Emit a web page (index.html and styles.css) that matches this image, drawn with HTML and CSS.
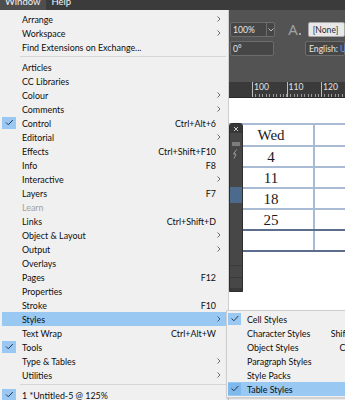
FILE: index.html
```html
<!DOCTYPE html>
<html>
<head>
<meta charset="utf-8">
<link rel="stylesheet" href="styles.css">
</head>
<body>
<div class="app">
  <div class="menubar">
    <span class="mb-item open">Window</span>
    <span class="mb-item">Help</span>
  </div>

  <div class="toolbar">
    <div class="tb-row">
      <div class="field dark combo"><span class="fv">100%</span><span class="dd"><svg width="6" height="4" viewBox="0 0 6 4"><path d="M0.5 0.5 L3 3 L5.5 0.5" fill="none" stroke="#bdbdbd" stroke-width="1"/></svg></span></div>
      <div class="a-icon">A<span class="a-dot"></span></div>
      <div class="field light">[None]</div>
    </div>
    <div class="tb-row">
      <div class="field dark angle"><span class="fv">0°</span></div>
      <div class="tb-gap"></div>
      <div class="field dark lang">English: <span class="blue">UK</span></div>
    </div>
  </div>

  <div class="ruler">
    <div class="r-lead"></div>
    <div class="r-seg"><span>100</span></div>
    <div class="r-seg"><span>110</span></div>
    <div class="r-seg"><span>120</span></div>
  </div>

  <div class="doc">
    <table class="cal">
      <tr><td>Wed</td><td></td></tr>
      <tr><td>4</td><td></td></tr>
      <tr><td>11</td><td></td></tr>
      <tr><td>18</td><td></td></tr>
      <tr class="dk"><td>25</td><td></td></tr>
      <tr class="dk"><td></td><td></td></tr>
    </table>
  </div>

  <div class="panel">
    <div class="p-head"><svg width="6" height="6" viewBox="0 0 6 6"><path d="M1 1 L5 5 M5 1 L1 5" stroke="#cfcfcf" stroke-width="1"/></svg></div>
    <span class="p-bar"></span>
    <svg class="p-bolt" width="6" height="10" viewBox="0 0 6 10"><path d="M4.5 0.5 L1.5 5 L4 5 L2 9.5" fill="none" stroke="#9a9a9a" stroke-width="1"/></svg>
    <div class="p-sel"></div>
    <div class="p-line"></div>
    <div class="p-line second"></div>
    <div class="p-foot"></div>
  </div>

  <div class="menu">
    <div class="mi"><span class="ck"></span><span class="lb">Arrange</span><span class="ar"><svg width="4" height="6" viewBox="0 0 4 6"><path d="M0.5 0.5 L3 3 L0.5 5.5" fill="none" stroke="#6b6b6b"/></svg></span></div>
    <div class="mi"><span class="ck"></span><span class="lb">Workspace</span><span class="ar"><svg width="4" height="6" viewBox="0 0 4 6"><path d="M0.5 0.5 L3 3 L0.5 5.5" fill="none" stroke="#6b6b6b"/></svg></span></div>
    <div class="mi"><span class="ck"></span><span class="lb">Find Extensions on Exchange...</span><span class="ar"></span></div>
    <div class="sep"></div>
    <div class="mi"><span class="ck"></span><span class="lb">Articles</span><span class="ar"></span></div>
    <div class="mi"><span class="ck"></span><span class="lb">CC Libraries</span><span class="ar"></span></div>
    <div class="mi"><span class="ck"></span><span class="lb">Colour</span><span class="ar"><svg width="4" height="6" viewBox="0 0 4 6"><path d="M0.5 0.5 L3 3 L0.5 5.5" fill="none" stroke="#6b6b6b"/></svg></span></div>
    <div class="mi"><span class="ck"></span><span class="lb">Comments</span><span class="ar"><svg width="4" height="6" viewBox="0 0 4 6"><path d="M0.5 0.5 L3 3 L0.5 5.5" fill="none" stroke="#6b6b6b"/></svg></span></div>
    <div class="mi"><span class="ck on"><svg width="14" height="12" viewBox="0 0 14 12"><path d="M4 5.5 L6.3 7.8 L10.8 3" fill="none" stroke="#26394f" stroke-width="1"/></svg></span><span class="lb">Control</span><span class="sc">Ctrl+Alt+6</span><span class="ar"></span></div>
    <div class="mi"><span class="ck"></span><span class="lb">Editorial</span><span class="ar"><svg width="4" height="6" viewBox="0 0 4 6"><path d="M0.5 0.5 L3 3 L0.5 5.5" fill="none" stroke="#6b6b6b"/></svg></span></div>
    <div class="mi"><span class="ck"></span><span class="lb">Effects</span><span class="sc">Ctrl+Shift+F10</span><span class="ar"></span></div>
    <div class="mi"><span class="ck"></span><span class="lb">Info</span><span class="sc">F8</span><span class="ar"></span></div>
    <div class="mi"><span class="ck"></span><span class="lb">Interactive</span><span class="ar"><svg width="4" height="6" viewBox="0 0 4 6"><path d="M0.5 0.5 L3 3 L0.5 5.5" fill="none" stroke="#6b6b6b"/></svg></span></div>
    <div class="mi"><span class="ck"></span><span class="lb">Layers</span><span class="sc">F7</span><span class="ar"></span></div>
    <div class="mi dis"><span class="ck"></span><span class="lb">Learn</span><span class="ar"></span></div>
    <div class="mi"><span class="ck"></span><span class="lb">Links</span><span class="sc">Ctrl+Shift+D</span><span class="ar"></span></div>
    <div class="mi"><span class="ck"></span><span class="lb">Object &amp; Layout</span><span class="ar"><svg width="4" height="6" viewBox="0 0 4 6"><path d="M0.5 0.5 L3 3 L0.5 5.5" fill="none" stroke="#6b6b6b"/></svg></span></div>
    <div class="mi"><span class="ck"></span><span class="lb">Output</span><span class="ar"><svg width="4" height="6" viewBox="0 0 4 6"><path d="M0.5 0.5 L3 3 L0.5 5.5" fill="none" stroke="#6b6b6b"/></svg></span></div>
    <div class="mi"><span class="ck"></span><span class="lb">Overlays</span><span class="ar"></span></div>
    <div class="mi"><span class="ck"></span><span class="lb">Pages</span><span class="sc">F12</span><span class="ar"></span></div>
    <div class="mi"><span class="ck"></span><span class="lb">Properties</span><span class="ar"></span></div>
    <div class="mi"><span class="ck"></span><span class="lb">Stroke</span><span class="sc">F10</span><span class="ar"></span></div>
    <div class="mi hi"><span class="ck"></span><span class="lb">Styles</span><span class="ar"><svg width="4" height="6" viewBox="0 0 4 6"><path d="M0.5 0.5 L3 3 L0.5 5.5" fill="none" stroke="#4b5b6b"/></svg></span></div>
    <div class="mi"><span class="ck"></span><span class="lb">Text Wrap</span><span class="sc">Ctrl+Alt+W</span><span class="ar"></span></div>
    <div class="mi"><span class="ck on"><svg width="14" height="12" viewBox="0 0 14 12"><path d="M4 5.5 L6.3 7.8 L10.8 3" fill="none" stroke="#26394f" stroke-width="1"/></svg></span><span class="lb">Tools</span><span class="ar"></span></div>
    <div class="mi"><span class="ck"></span><span class="lb">Type &amp; Tables</span><span class="ar"><svg width="4" height="6" viewBox="0 0 4 6"><path d="M0.5 0.5 L3 3 L0.5 5.5" fill="none" stroke="#6b6b6b"/></svg></span></div>
    <div class="mi"><span class="ck"></span><span class="lb">Utilities</span><span class="ar"><svg width="4" height="6" viewBox="0 0 4 6"><path d="M0.5 0.5 L3 3 L0.5 5.5" fill="none" stroke="#6b6b6b"/></svg></span></div>
    <div class="sep"></div>
    <div class="mi"><span class="ck on"><svg width="14" height="12" viewBox="0 0 14 12"><path d="M4 5.5 L6.3 7.8 L10.8 3" fill="none" stroke="#26394f" stroke-width="1"/></svg></span><span class="lb">1 *Untitled-5 @ 125%</span><span class="ar"></span></div>
  </div>

  <div class="submenu">
    <div class="mi"><span class="ck on"><svg width="13" height="12" viewBox="0 0 13 12"><path d="M3.5 5.5 L5.8 7.8 L10.3 3" fill="none" stroke="#26394f" stroke-width="1"/></svg></span><span class="lb">Cell Styles</span><span class="ar"></span></div>
    <div class="mi"><span class="ck"></span><span class="lb">Character Styles</span><span class="sc">Shift+F11</span><span class="ar"></span></div>
    <div class="mi"><span class="ck"></span><span class="lb">Object Styles</span><span class="sc">Ctrl+F7</span><span class="ar"></span></div>
    <div class="mi"><span class="ck"></span><span class="lb">Paragraph Styles</span><span class="sc">F11</span><span class="ar"></span></div>
    <div class="mi"><span class="ck"></span><span class="lb">Style Packs</span><span class="ar"></span></div>
    <div class="mi hi"><span class="ck on"><svg width="13" height="12" viewBox="0 0 13 12"><path d="M3.5 5.5 L5.8 7.8 L10.3 3" fill="none" stroke="#26394f" stroke-width="1"/></svg></span><span class="lb">Table Styles</span><span class="ar"></span></div>
  </div>
</div>
</body>
</html>
```

FILE: styles.css
```css
* { box-sizing: border-box; margin: 0; padding: 0; }
html, body { width: 345px; height: 400px; overflow: hidden; }
body { background: #535353; font-family: Lato, "Noto Sans", sans-serif; }

.app { position: relative; width: 345px; height: 400px; overflow: hidden; background: #535353; }

/* menubar */
.menubar { height: 10px; background: #3b3b3b; display: flex; overflow: hidden; color: #f4f4f4; font-size: 9.5px; }
.mb-item { height: 10px; line-height: 4px; padding: 0 6px 0 5px; }
.mb-item.open { background: #4e4e4e; }

/* control panel */
.toolbar { height: 72px; padding: 12px 0 0 230px; display: flex; flex-direction: column; gap: 4px; background: #535353; }
.tb-row { display: flex; align-items: center; height: 15px; }
.field { height: 15px; border: 1px solid #6c6c6c; border-radius: 2px; font-size: 8.6px; display: flex; align-items: center; padding-left: 2px; white-space: nowrap; }
.field.dark { background: #464646; color: #e6e6e6; }
.field.combo { width: 49px; padding-left: 0; }
.combo .fv { width: 36px; padding-left: 2px; border-right: 1px solid #6c6c6c; height: 100%; display: flex; align-items: center; }
.combo .dd { flex: 1; display: flex; justify-content: center; align-items: center; }
.field.angle { width: 49px; }
.a-icon { width: 21px; margin-left: 13px; color: #a3a3a3; font-size: 15px; line-height: 15px; display: flex; align-items: flex-end; font-family: "Open Sans", sans-serif; }
.a-dot { width: 2px; height: 2px; background: #a3a3a3; margin: 0 0 2px 1px; }
.tb-gap { width: 34px; }
.field.light { background: #e8e8e8; border-color: #a8a8a8; color: #2e2e2e; width: 40px; padding-left: 4px; }
.field.lang { width: 40px; padding-left: 3px; }
.blue { color: #4d9df0; margin-left: 2px; }

/* ruler */
.ruler { height: 16px; background: #3a3a3a; display: flex; border-bottom: 1px solid #2a2a2a; color: #e4e4e4; font-size: 8.6px; }
.r-lead { width: 252px; flex: none; }
.r-seg { width: 34.5px; flex: none; border-left: 1px solid #bdbdbd; padding: 1px 0 0 1px; line-height: 9px;
  background: repeating-linear-gradient(90deg, transparent 0 2.45px, #9a9a9a 2.45px 3.45px) left bottom / 100% 3px no-repeat; }

/* document */
.doc { height: 303px; background: #ffffff; padding: 25px 0 0 227px; overflow: hidden; }
.cal { width: 172px; table-layout: fixed; border-collapse: collapse; font-family: "Liberation Serif", serif; font-size: 15px; color: #1b1b1b; }
.cal td { width: 86px; height: 21px; border: 2px solid #a9bad4; text-align: center; vertical-align: middle; padding: 0; line-height: 16px; }
.cal tr:first-child td { height: 22px; }
.cal tr.dk td { border-bottom-color: #5d6e8d; }

/* collapsed panel */
.panel { position: absolute; left: 229px; top: 123px; width: 14px; height: 169px; background: #474747; border: 1px solid #2e2e2e; border-radius: 3px 3px 0 0; display: flex; flex-direction: column; align-items: center; }
.p-head { width: 100%; height: 9px; background: #383838; border-radius: 2px 2px 0 0; display: flex; justify-content: center; align-items: center; flex: none; }
.p-bar { width: 8px; height: 4px; background: #7d7d7d; margin-top: 9px; flex: none; }
.p-bolt { margin-top: 3px; margin-right: 3px; flex: none; }
.p-sel { width: 100%; height: 16px; margin-top: 28px; background: #4c6a8c; flex: none; }
.p-line { width: 100%; height: 1px; background: #3a3a3a; margin-top: 62px; flex: none; }
.p-line.second { margin-top: 11px; }
.p-foot { width: 100%; margin-top: auto; height: 3px; border-top: 1px solid #3a3a3a; background: #3a3a3a; flex: none; }

/* menus */
.menu { position: absolute; left: 0; top: 10px; width: 229px; height: 392px; background: #f0f0f0; border-right: 1px solid #cfcfcf; padding-top: 2px; font-size: 8.9px; color: #0d0d0d; }
.mi { display: flex; align-items: center; height: 14px; margin: 0 2px; white-space: nowrap; }
.ck { width: 14px; height: 12px; flex: none; display: flex; }
.ck.on { background: #99c9f2; }
.lb { flex: 1; margin-left: 6px; }
.sc { flex: none; }
.ar { width: 10px; flex: none; display: flex; align-items: center; padding-left: 1px; }
.mi.hi { background: #99c9f2; }
.mi.hi .ck.on { background: #7fb8ea; }
.mi.dis { color: #a2a2a2; }
.sep { height: 6px; padding-top: 2px; margin: 0 2px 0 20px; }
.sep::before { content: ""; display: block; height: 1px; background: #d6d6d6; }

.submenu { position: absolute; left: 226px; top: 310px; width: 156px; height: 88px; background: #f0f0f0; border: 1px solid #cfcfcf; padding-top: 1px; font-size: 8.9px; color: #0d0d0d; box-shadow: 1px 1px 2px rgba(0,0,0,0.25); }
.submenu .mi { margin: 0 2px 0 1px; }
.submenu .ck { width: 13px; }
```
